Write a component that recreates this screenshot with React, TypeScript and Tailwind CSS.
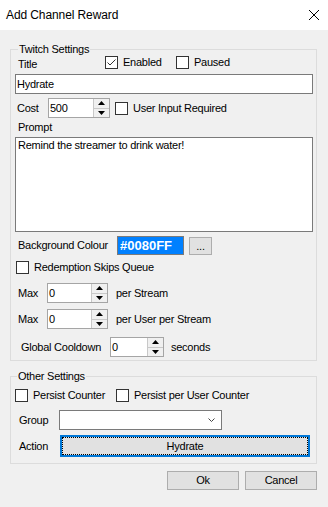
import React from "react";

const FONT = "font-['Liberation_Sans',Arial,sans-serif]";

function Check({ checked = false, label, className = "" }: { checked?: boolean; label: string; className?: string }) {
  return (
    <div className={`flex items-center h-[13px] ${className}`}>
      <div className="w-[13px] h-[13px] border border-[#333333] bg-white shrink-0 flex items-center justify-center">
        {checked && (
          <svg width="11" height="11" viewBox="0 0 11 11">
            <path d="M1.5 5.5 L4 8 L9.5 2.5" fill="none" stroke="#333333" strokeWidth="1" />
          </svg>
        )}
      </div>
      <span className="ml-[5px] leading-[13px] whitespace-nowrap">{label}</span>
    </div>
  );
}

function Spin({ value, className = "" }: { value: string; className?: string }) {
  return (
    <div className={`flex h-[20px] border border-[#a5a5a5] bg-white shrink-0 ${className}`}>
      <div className="flex-1 pl-[1px] leading-[18px]">{value}</div>
      <div className="w-[16px] flex flex-col border-l border-[#c8c8c8] bg-[#f0f0f0]">
        <div className="flex-1 flex items-center justify-center border-b border-[#c8c8c8]">
          <svg width="7" height="4" viewBox="0 0 7 4">
            <path d="M0 4 L3.5 0 L7 4 Z" fill="#000" />
          </svg>
        </div>
        <div className="flex-1 flex items-center justify-center">
          <svg width="7" height="4" viewBox="0 0 7 4">
            <path d="M0 0 L3.5 4 L7 0 Z" fill="#000" />
          </svg>
        </div>
      </div>
    </div>
  );
}

export default function App() {
  return (
    <div className={`w-[328px] h-[507px] bg-[#f0f0f0] text-black text-[11px] tracking-[-0.25px] ${FONT} overflow-hidden`}>
      {/* title bar */}
      <div className="h-[30px] bg-white flex items-center justify-between pl-[6px] pr-[9px]">
        <span className="text-[12px] tracking-[-0.1px] leading-[14px]">Add Channel Reward</span>
        <svg width="10" height="10" viewBox="0 0 10 10">
          <path d="M0 0 L10 10 M10 0 L0 10" stroke="#000" strokeWidth="1" />
        </svg>
      </div>

      {/* Twitch Settings */}
      <fieldset className="ml-[10px] mt-[13px] w-[307px] border border-[#dcdcdc] pb-[3px]">
        <legend className="ml-[7px] px-[1px] h-[13px] leading-[13px]">Twitch Settings</legend>

        <div className="flex items-center h-[13px] pl-[7px]">
          <span className="w-[87px] leading-[13px] relative top-[2px]">Title</span>
          <Check checked label="Enabled" className="w-[71px]" />
          <Check label="Paused" />
        </div>

        <div className="mt-[5px] ml-[4px] w-[298px] h-[20px] border border-[#7a7a7a] bg-white pl-[1px] leading-[18px]">
          Hydrate
        </div>

        <div className="mt-[4px] flex items-center h-[20px] pl-[6px]">
          <span className="w-[31px]">Cost</span>
          <Spin value="500" className="w-[62px]" />
          <Check label="User Input Required" className="ml-[5px]" />
        </div>

        <div className="mt-[3px] h-[13px] leading-[13px] pl-[7px]">Prompt</div>

        <div className="mt-[3px] ml-[4px] w-[298px] h-[95px] border border-[#7a7a7a] bg-white pl-[2px] pt-[1px] leading-[13px]">
          Remind the streamer to drink water!
        </div>

        <div className="mt-[4px] flex items-center h-[19px] pl-[7px]">
          <span className="w-[99px]">Background Colour</span>
          <div className="w-[67px] h-[19px] border border-[#7a7a7a] bg-[#0080ff] text-white font-bold text-[13px] tracking-normal leading-[17px] pl-[2px]">
            #0080FF
          </div>
          <div className="ml-[5px] w-[23px] h-[18px] border border-[#adadad] bg-[#e1e1e1] flex items-center justify-center leading-[16px]">
            ...
          </div>
        </div>

        <div className="mt-[6px] pl-[5px]">
          <Check label="Redemption Skips Queue" />
        </div>

        <div className="mt-[9px] flex items-center h-[20px] pl-[7px]">
          <span className="w-[29px]">Max</span>
          <Spin value="0" className="w-[61px]" />
          <span className="ml-[8px]">per Stream</span>
        </div>

        <div className="mt-[6px] flex items-center h-[20px] pl-[7px]">
          <span className="w-[29px]">Max</span>
          <Spin value="0" className="w-[61px]" />
          <span className="ml-[8px]">per User per Stream</span>
        </div>

        <div className="mt-[8px] flex items-center h-[20px] pl-[10px]">
          <span className="w-[89px]">Global Cooldown</span>
          <Spin value="0" className="w-[54px]" />
          <span className="ml-[7px]">seconds</span>
        </div>
      </fieldset>

      {/* Other Settings */}
      <fieldset className="ml-[10px] mt-[9px] w-[307px] border border-[#dcdcdc] pb-[6px]">
        <legend className="ml-[6px] px-[1px] h-[13px] leading-[13px]">Other Settings</legend>

        <div className="mt-[6px] flex items-center pl-[4px]">
          <Check label="Persist Counter" className="w-[101px]" />
          <Check label="Persist per User Counter" />
        </div>

        <div className="mt-[8px] flex items-center h-[20px] pl-[8px]">
          <span className="w-[40px]">Group</span>
          <div className="w-[163px] h-[20px] border border-[#7a7a7a] bg-white flex items-center justify-end pr-[6px]">
            <svg width="7" height="4" viewBox="0 0 7 4">
              <path d="M0.5 0.5 L3.5 3.5 L6.5 0.5" fill="none" stroke="#444" strokeWidth="1" />
            </svg>
          </div>
        </div>

        <div className="mt-[5px] flex items-center h-[22px] pl-[8px]">
          <span className="w-[41px]">Action</span>
          <div className="w-[250px] h-[22px] border-2 border-[#0078d7] bg-[#e1e1e1]">
            <div className="w-full h-full border border-dotted border-black flex items-center justify-center leading-[13px]">
              Hydrate
            </div>
          </div>
        </div>
      </fieldset>

      <div className="mt-[7px] flex justify-end pr-[11px] gap-[6px]">
        <div className="w-[72px] h-[19px] border border-[#adadad] bg-[#e1e1e1] flex items-center justify-center leading-[13px]">
          Ok
        </div>
        <div className="w-[72px] h-[19px] border border-[#adadad] bg-[#e1e1e1] flex items-center justify-center leading-[13px]">
          Cancel
        </div>
      </div>
    </div>
  );
}
